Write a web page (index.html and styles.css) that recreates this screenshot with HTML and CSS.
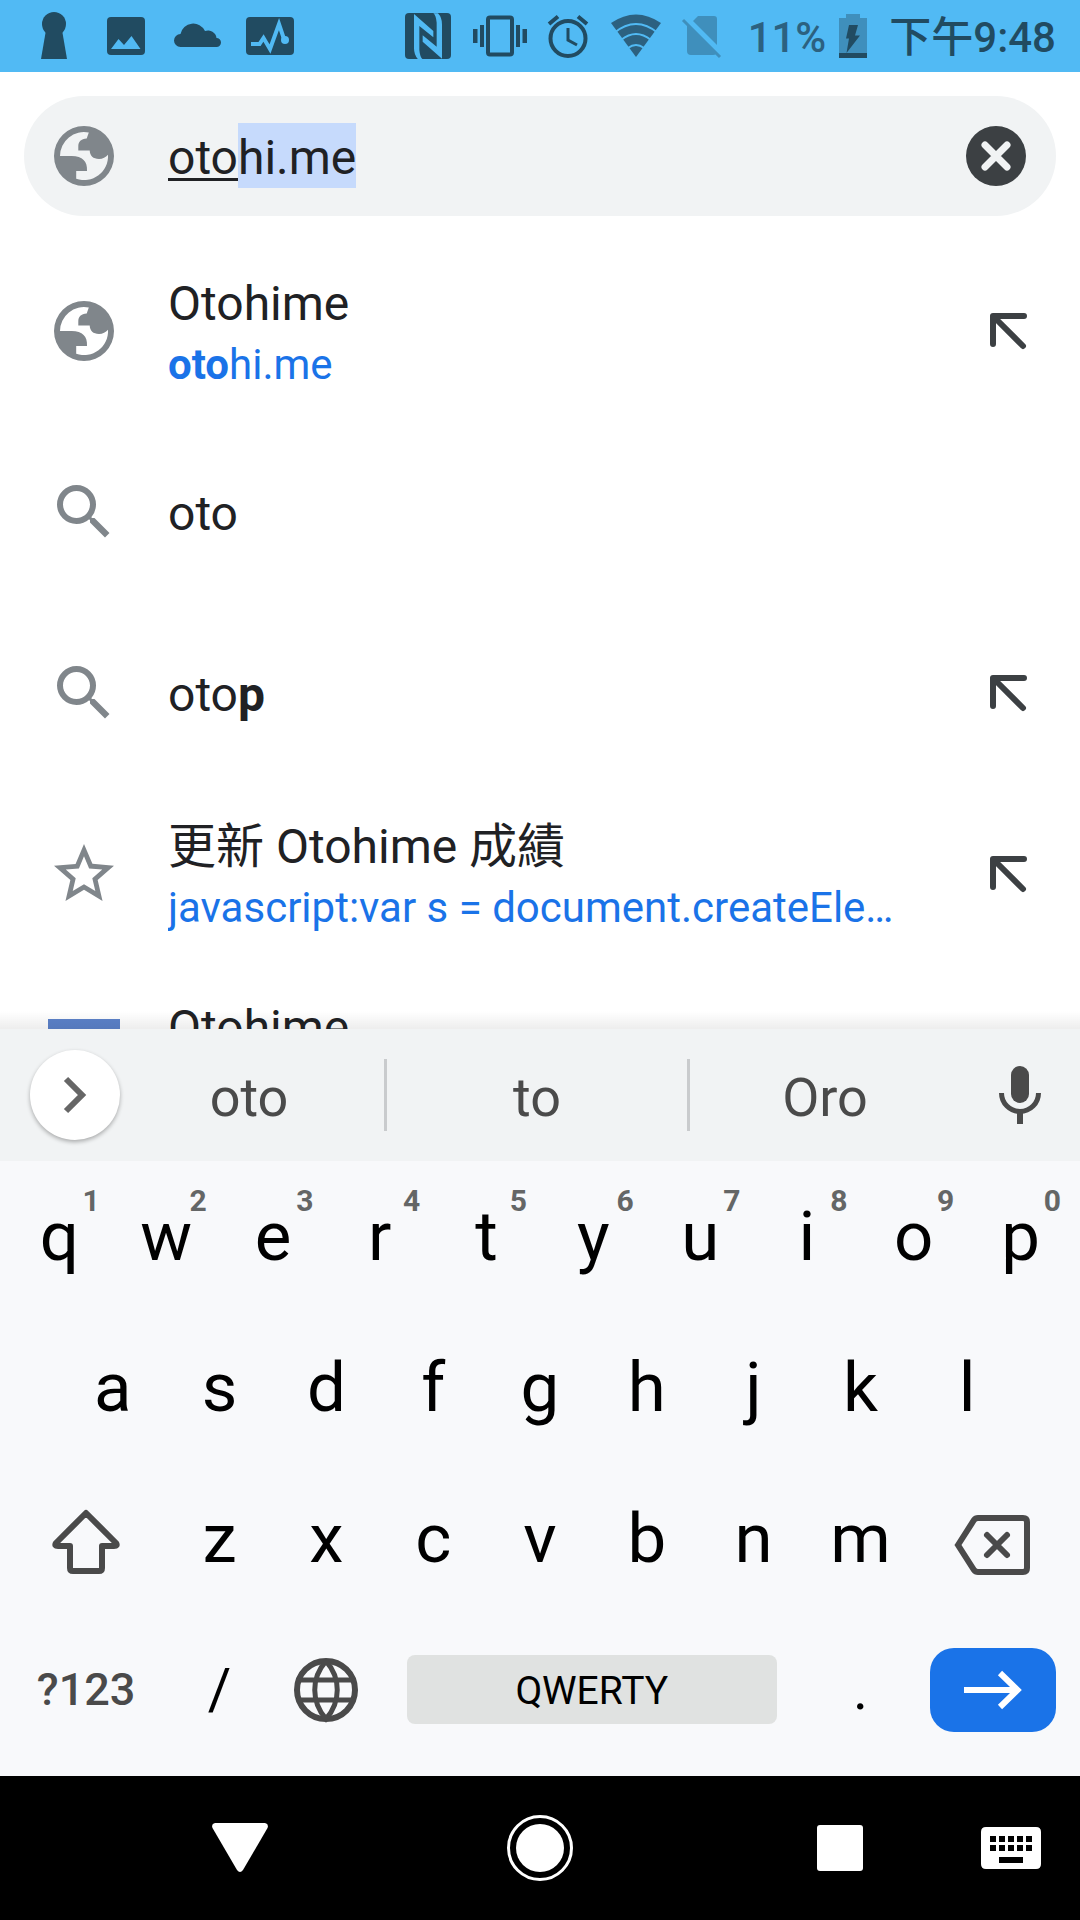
FILE: index.html
```html
<!DOCTYPE html>
<html lang="zh-Hant">
<head>
<meta charset="utf-8">
<meta name="viewport" content="width=device-width, initial-scale=1">
<title>otohi.me</title>
<link rel="stylesheet" href="styles.css">
</head>
<body>
<svg class="sprite" aria-hidden="true">
  <symbol id="globe" viewBox="0 0 24 24"><path fill-rule="evenodd" d="M12 2a10 10 0 1 0 0 20a10 10 0 1 0 0-20zM4 12A8 8 0 0 1 13.6 4.2L12.9 6.2C11 6.4 10.1 7.2 10.1 8.9V10.2H13.9C14 12 15 13 17 13C18.300 13 19.200 12.500 20 11.600A8 8 0 0 1 9.400 19.600V17H13C13.200 13.800 11.500 12 7.900 12z"/></symbol>
  <symbol id="search" viewBox="0 0 24 24"><path d="M15.500 14h-.79l-.28-.27A6.471 6.471 0 0 0 16 9.500 6.500 6.500 0 1 0 9.500 16c1.610 0 3.090-.59 4.230-1.570l.27.28v.79l5 4.990L20.490 19l-4.990-5zm-6 0C7.010 14 5 11.990 5 9.500S7.010 5 9.500 5 14 7.010 14 9.500 11.990 14 9.500 14z"/></symbol>
  <symbol id="star" viewBox="0 0 24 24"><path d="M22 9.240l-7.190-.62L12 2 9.190 8.630 2 9.240l5.460 4.730L5.820 21 12 17.270 18.180 21l-1.630-7.030L22 9.240zM12 15.400l-3.760 2.270 1-4.280-3.320-2.880 4.380-.38L12 6.100l1.710 4.040 4.380.38-3.320 2.880 1 4.280L12 15.400z"/></symbol>
  <symbol id="refine" viewBox="0 0 72 72"><path class="line" stroke-width="6" stroke-linecap="round" stroke-linejoin="round" d="M21 49V21H52M22 22L51 51"/></symbol>
</svg>

<header class="status">
  <div class="status-left">
    <svg width="48" height="48"><circle cx="24" cy="12" r="12"/><path d="M16 18H32L37 47H11z"/></svg>
    <svg width="48" height="48"><rect x="5" y="5" width="38" height="38" rx="4"/><path class="cut" d="M9 37L16.500 27L22 33L29.500 24L38.500 37z"/></svg>
    <svg width="48" height="48"><path d="M6.500 35a6.500 6.500 0 0 1 0-13A13 13 0 0 1 31 19A8.500 8.500 0 0 1 42.500 26a4.500 4.500 0 0 1 0 9z"/></svg>
    <svg width="48" height="48"><rect y="5" width="48" height="38" rx="4"/><path class="cut-line" stroke-width="4" d="M5 32H13.500L17.500 26L24 37L33 12L38 27"/><circle class="cut" cx="39" cy="28" r="4"/></svg>
  </div>
  <div class="status-right">
    <svg width="48" height="48"><rect x="1" y="1" width="46" height="46" rx="4"/><g class="cut" transform="translate(-14 -12) scale(.33333)"><path d="M72 42L130 93V112L88 78V150Q90 172 98 178H84Q72 165 72 145z"/><path d="M156 176L98 125V106L140 140V68Q138 46 130 40H144Q156 53 156 73z"/></g></svg>
    <svg width="54" height="48"><rect class="line" x="16" y="5.500" width="24" height="37" rx="2" stroke-width="4"/><path d="M1 17h4.500v14H1zM8 13h4v22H8zM44 13h4v22h-4zM50.500 17H55v14h-4.500z"/></svg>
    <svg width="44" height="48"><g class="line" stroke-width="4"><circle cx="22" cy="26.500" r="17.500"/><path d="M3 12L12 4.500M32 4.500L41 12"/><path stroke-width="3" d="M22 16V28L31 33"/></g></svg>
    <svg class="soft" width="52" height="48"><path d="M26 45L1 11Q26-6 51 11z"/><g class="cut-line" stroke-width="2"><path d="M4 21Q26 3 48 21M11 28Q26 16 41 28M18 36Q26 30 34 36"/></g></svg>
    <svg class="faint" width="40" height="48"><path d="M11 9L16 4H32Q35 4 35 7V33zM5 13L34 42Q33 43 31 43H9Q5 43 5 39z"/><path class="line" stroke-width="3" d="M1 8L38 45"/></svg>
    <span class="percent">11%</span>
    <svg width="28" height="48"><path class="faint" d="M7 2H21V6H28V41H0V6H7z"/><path d="M0 41H28V46H0zM10 13H19L16 23.500H21L7.500 41L10 26.500H7z"/></svg>
    <time class="clock" datetime="21:48">下午9:48</time>
  </div>
</header>

<form class="omnibox" role="search">
  <svg class="icon gray"><use href="#globe"/></svg>
  <input class="url" type="text" value="otohi.me" aria-label="搜尋或輸入網址" autocomplete="off" spellcheck="false">
  <button class="icon-button" type="button" aria-label="清除"><svg class="icon dark" viewBox="0 0 72 72"><circle cx="36" cy="36" r="30"/><path class="clear-x" d="M25 25L47 47M47 25L25 47"/></svg></button>
</form>

<main class="results">
  <div class="result">
    <svg class="icon gray"><use href="#globe"/></svg>
    <a class="text" href="#"><span class="title">Otohime</span><span class="link"><b>oto</b>hi.me</span></a>
    <button class="icon-button" type="button" aria-label="填入 otohi.me"><svg class="icon dark"><use href="#refine"/></svg></button>
  </div>
  <div class="result">
    <svg class="icon gray"><use href="#search"/></svg>
    <a class="text" href="#"><span class="title">oto</span></a>
  </div>
  <div class="result">
    <svg class="icon gray"><use href="#search"/></svg>
    <a class="text" href="#"><span class="title">oto<b>p</b></span></a>
    <button class="icon-button" type="button" aria-label="填入 otop"><svg class="icon dark"><use href="#refine"/></svg></button>
  </div>
  <div class="result">
    <svg class="icon gray"><use href="#star"/></svg>
    <a class="text" href="#"><span class="title">更新 Otohime 成績</span><span class="link">javascript:var s = document.createEle…</span></a>
    <button class="icon-button" type="button" aria-label="填入書籤"><svg class="icon dark"><use href="#refine"/></svg></button>
  </div>
  <div class="result">
    <span class="site-icon"></span>
    <a class="text two-line" href="#"><span class="title">Otohime</span></a>
  </div>
</main>

<section class="keyboard" aria-label="鍵盤">
  <div class="strip">
    <button class="expand" type="button" aria-label="展開"><svg width="90" height="90"><path class="line" stroke-width="6" d="M36 29L52 45L36 61"/></svg></button>
    <button class="word" type="button">oto</button>
    <button class="word wide" type="button">to</button>
    <button class="word" type="button">Oro</button>
    <button class="mic" type="button" aria-label="語音輸入"><svg width="42" height="58"><rect x="12" width="18" height="37" rx="9"/><path class="line" stroke-width="5" d="M2.500 27a18.500 18.500 0 0 0 37 0"/><path d="M18 46h6v12h-6z"/></svg></button>
  </div>
  <div class="keys">
    <div class="row">
      <button class="key">q<span class="hint">1</span></button><button class="key">w<span class="hint">2</span></button><button class="key">e<span class="hint">3</span></button><button class="key">r<span class="hint">4</span></button><button class="key">t<span class="hint">5</span></button><button class="key">y<span class="hint">6</span></button><button class="key">u<span class="hint">7</span></button><button class="key">i<span class="hint">8</span></button><button class="key">o<span class="hint">9</span></button><button class="key">p<span class="hint">0</span></button>
    </div>
    <div class="row middle">
      <button class="key">a</button><button class="key">s</button><button class="key">d</button><button class="key">f</button><button class="key">g</button><button class="key">h</button><button class="key">j</button><button class="key">k</button><button class="key">l</button>
    </div>
    <div class="row">
      <button class="key side" aria-label="Shift"><svg width="80" height="80"><path class="line" stroke-width="6" stroke-linejoin="round" d="M40 14L10 44Q8 47 12 47H24V69Q24 72 27 72H53Q56 72 56 69V47H68Q72 47 70 44z"/></svg></button>
      <button class="key">z</button><button class="key">x</button><button class="key">c</button><button class="key">v</button><button class="key">b</button><button class="key">n</button><button class="key">m</button>
      <button class="key side" aria-label="Backspace"><svg width="80" height="80"><path class="line" stroke-width="6" d="M4 46L20 21Q21.500 19 24 19H69Q73 19 73 23V69Q73 73 69 73H24Q21.500 73 20 71z"/><path class="line" stroke-width="6" stroke-linecap="round" d="M33 36L53 56M53 36L33 56"/></svg></button>
    </div>
    <div class="row">
      <button class="key side mode">?123</button>
      <button class="key mark">/</button>
      <button class="key" aria-label="切換語言"><svg width="64" height="64"><g class="line" stroke-width="6"><circle cx="32" cy="32" r="29"/><path stroke-width="5" d="M32 3C17 20 17 44 32 61C47 44 47 20 32 3M5 22H59M5 42H59"/></g></svg></button>
      <button class="key space"><span class="space-bar">QWERTY</span></button>
      <button class="key mark">.</button>
      <button class="key side" aria-label="前往"><span class="go-face"><svg width="58" height="38"><path class="line" stroke-width="6" d="M0 19H53M36 2L53.500 19L36 36"/></svg></span></button>
    </div>
  </div>
</section>

<nav class="nav">
  <button type="button" aria-label="返回"><svg width="56" height="50"><path d="M3 0H53Q57 1 55.500 5L31 47Q28 51 25 47L.5 5Q-1 1 3 0z"/></svg></button>
  <button type="button" aria-label="主畫面"><svg width="66" height="66"><circle class="line" cx="33" cy="33" r="31.500" stroke-width="3"/><circle cx="33" cy="33" r="24"/></svg></button>
  <button type="button" aria-label="最近"><svg width="46" height="46"><rect width="46" height="46" rx="3"/></svg></button>
  <button class="ime" type="button" aria-label="切換鍵盤"><svg width="60" height="42"><path fill-rule="evenodd" d="M5 0H55Q60 0 60 5V37Q60 42 55 42H5Q0 42 0 37V5Q0 0 5 0zM9 9V15H15V9zM18 9V15H24V9zM27 9V15H33V9zM36 9V15H42V9zM45 9V15H51V9zM9 18V24H15V18zM18 18V24H24V18zM27 18V24H33V18zM36 18V24H42V18zM45 18V24H51V18zM18 30V36H42V30z"/></svg></button>
</nav>
</body>
</html>
```
FILE: styles.css
```css
* { box-sizing: border-box; }

body {
  margin: 0;
  height: 100vh;
  display: flex;
  flex-direction: column;
  background: #fff;
  color: #202124;
  font-family: Roboto, "Noto Sans CJK TC", sans-serif;
}

button {
  margin: 0;
  padding: 0;
  border: 0;
  background: none;
  color: inherit;
  font: inherit;
}

svg { display: block; flex: none; fill: currentColor; overflow: visible; }
.sprite { position: absolute; width: 0; height: 0; }
.line { fill: none; stroke: currentColor; }

/* Status bar */
.status {
  flex: none;
  display: flex;
  justify-content: space-between;
  align-items: center;
  height: 72px;
  padding: 0 24px 0 30px;
  background: #51baf4;
  color: #214b61;
  font-size: 42px;
  font-weight: 500;
  line-height: 68px;
}
.status-left { display: flex; gap: 24px; }
.status-right { display: flex; align-items: center; gap: 20px; }
.cut { fill: #51baf4; }
.cut-line { fill: none; stroke: #51baf4; }
.soft { color: #2c6180; }
.faint { color: #3f8fbc; fill: #3f8fbc; }
.faint .line { fill: none; }
.percent { margin: 0 -7px 0 6px; padding-top: 4px; color: #2c6180; }
.clock { margin-left: 2px; padding-top: 4px; }

/* Address bar */
.omnibox {
  flex: none;
  display: flex;
  align-items: center;
  height: 120px;
  margin: 24px;
  padding: 0 24px;
  border-radius: 60px;
  background: #f1f3f4;
}
.icon { width: 72px; height: 72px; flex: none; }
.gray { color: #80868b; }
.dark { color: #3c4043; }
.clear-x { fill: none; stroke: #f1f3f4; stroke-width: 7px; stroke-linecap: round; }
.url {
  flex: 1;
  min-width: 0;
  height: 66px;
  margin-left: 48px;
  padding: 2px 0 0;
  border: 0;
  outline: 0;
  background:
    linear-gradient(#202124, #202124) 0 55px / 70px 3px no-repeat,
    linear-gradient(#c6dafc, #c6dafc) 70px 0 / 118px 65px no-repeat;
  color: inherit;
  font: 48px/64px Roboto, sans-serif;
}

/* Suggestions */
.results {
  position: relative;
  flex: 1;
  min-height: 0;
  overflow: hidden;
}
.results::after {
  content: "";
  position: absolute;
  inset: auto 0 0;
  height: 18px;
  background: linear-gradient(rgba(0, 0, 0, 0), rgba(0, 0, 0, .07));
}
.result {
  display: flex;
  align-items: center;
  height: 181px;
  padding: 0 36px 0 48px;
}
.text {
  flex: 1;
  min-width: 0;
  margin: 0 60px 0 48px;
  padding-top: 5px;
  color: inherit;
  text-decoration: none;
}
.two-line { min-height: 127px; }
.title, .link {
  display: block;
  overflow: hidden;
  white-space: nowrap;
  text-overflow: ellipsis;
}
.title { font-size: 48px; line-height: 64px; }
.link { color: #1a73e8; font-size: 42px; line-height: 58px; }
.site-icon { width: 72px; height: 72px; background: #5c82ca; }

/* Keyboard */
.keyboard { flex: none; background: #f8f9fb; color: #000; }
.strip {
  display: flex;
  align-items: center;
  height: 132px;
  padding-left: 30px;
  background: #f1f3f4;
  color: #4a4a4a;
}
.expand {
  flex: none;
  width: 90px;
  height: 90px;
  margin-right: -6px;
  border-radius: 50%;
  background: #fff;
  box-shadow: 0 2px 4px rgba(0, 0, 0, .3);
  color: #666;
}
.word { flex: 9; height: 72px; padding-top: 6px; font-size: 54px; line-height: 66px; }
.wide { flex: 10; border: solid #c9cbcd; border-width: 0 3px; }
.mic { flex: none; width: 120px; display: grid; place-items: center; }

.keys { padding: 0 6px 11px; }
.row { display: flex; height: 151px; }
.middle { padding: 0 5%; }
.key {
  position: relative;
  flex: 2;
  min-width: 0;
  display: flex;
  align-items: center;
  justify-content: center;
  font-size: 69px;
}
.key svg { color: #4a4a4a; }
.side { flex: 3; }
.hint {
  position: absolute;
  top: 22px;
  right: 13px;
  color: #646666;
  font-size: 30px;
  font-weight: 700;
  line-height: 36px;
}
.mode { color: #4a4a4a; font-size: 45px; font-weight: 500; }
.mark { font-size: 57px; }
.space { flex: 8; }
.space-bar {
  flex: 1;
  margin: 0 30px 0 27px;
  padding-top: 3px;
  border-radius: 8px;
  background: #e0e2e1;
  font-size: 39px;
  line-height: 66px;
}
.go-face {
  flex: 1;
  height: 84px;
  margin: 0 18px 0 16px;
  display: grid;
  place-items: center;
  border-radius: 24px;
  background: #1a73e8;
}
.go-face svg { color: #fff; }

/* Navigation bar */
.nav {
  flex: none;
  display: grid;
  grid-template-columns: minmax(0, 3fr) repeat(3, minmax(0, 10fr)) minmax(0, 3fr);
  align-items: center;
  height: 144px;
  background: #000;
  color: #fff;
}
.nav button { justify-self: center; }
.nav button:first-child { grid-column: 2; }
.nav .ime { justify-self: end; margin-right: 39px; }
```
